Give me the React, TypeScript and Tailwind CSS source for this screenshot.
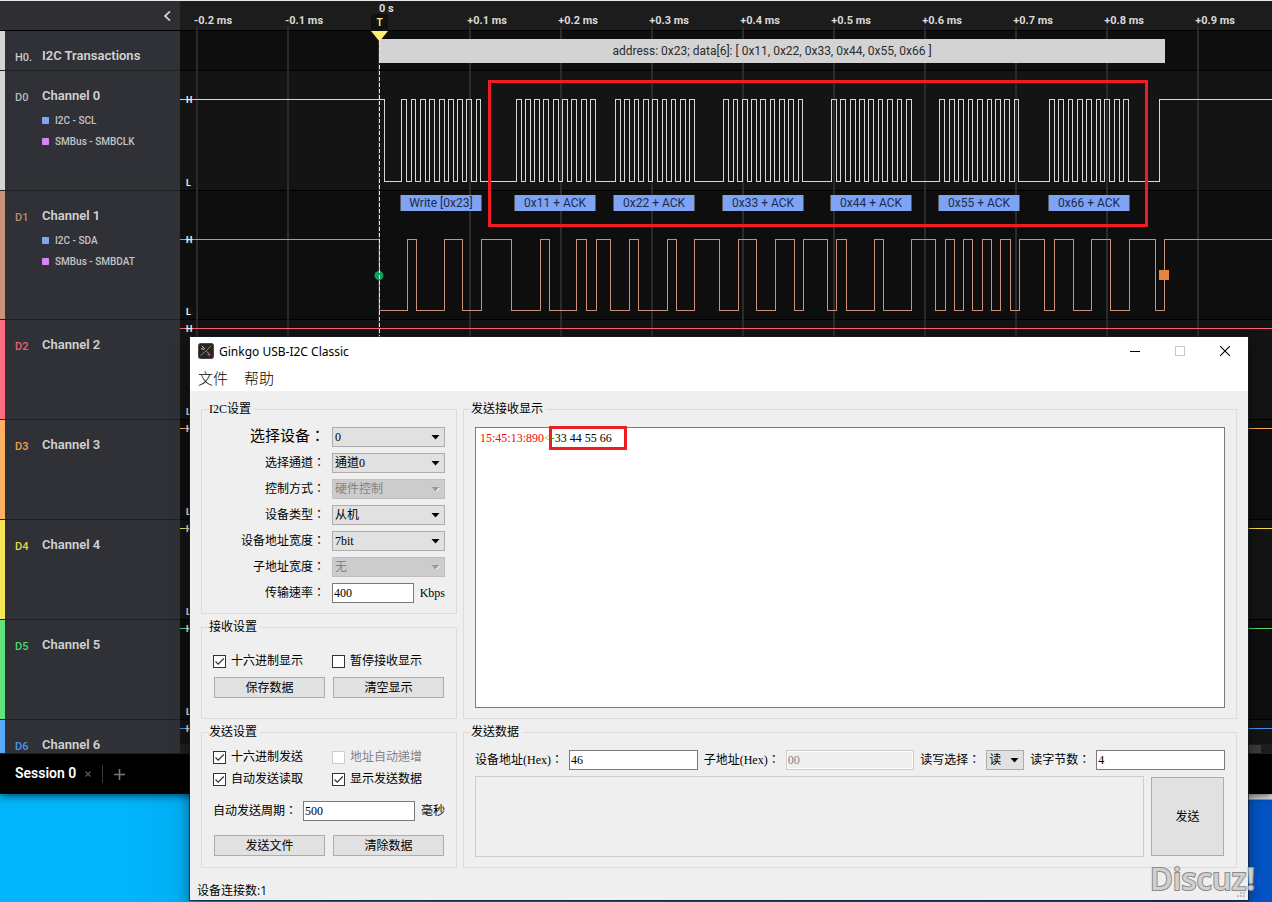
import type { ReactNode } from 'react';

const SANS = "font-['Roboto','Noto_Sans_CJK_SC',sans-serif]";
const FORM = "font-['Liberation_Serif','Noto_Sans_CJK_TC',serif]";

/* ---------- Logic analyzer: channel list ---------- */

type Channel = {
  code: string;
  name: string;
  strip: string;
  text: string;
  height: string;
  lane: string;
  tags?: string[];
};

const channels: Channel[] = [
  { code: 'H0.', name: 'I2C Transactions', strip: 'bg-[#d4d4d4]', text: 'text-[#c9c9cb]', height: 'h-10', lane: 'bg-[#0e0e0e]' },
  { code: 'D0', name: 'Channel 0', strip: 'bg-[#d4d4d4]', text: 'text-[#b9b9bb]', height: 'h-[120px]', lane: 'bg-[#141414]', tags: ['I2C - SCL', 'SMBus - SMBCLK'] },
  { code: 'D1', name: 'Channel 1', strip: 'bg-[#c7937a]', text: 'text-[#c08a70]', height: 'h-[129px]', lane: 'bg-[#0e0e0e]', tags: ['I2C - SDA', 'SMBus - SMBDAT'] },
  { code: 'D2', name: 'Channel 2', strip: 'bg-[#ff6b81]', text: 'text-[#f0607a]', height: 'h-[100px]', lane: 'bg-[#141414]' },
  { code: 'D3', name: 'Channel 3', strip: 'bg-[#ffb061]', text: 'text-[#f0a050]', height: 'h-[100px]', lane: 'bg-[#0e0e0e]' },
  { code: 'D4', name: 'Channel 4', strip: 'bg-[#f8e556]', text: 'text-[#e8d84c]', height: 'h-[100px]', lane: 'bg-[#141414]' },
  { code: 'D5', name: 'Channel 5', strip: 'bg-[#5fe37c]', text: 'text-[#52d870]', height: 'h-[100px]', lane: 'bg-[#0e0e0e]' },
  { code: 'D6', name: 'Channel 6', strip: 'bg-[#56a8fa]', text: 'text-[#4a98ea]', height: 'h-[34px]', lane: 'bg-[#141414]' },
];

const tagColors = ['bg-[#7ea6f6]', 'bg-[#d884f2]'];

function ChannelRow({ channel }: { channel: Channel }) {
  return (
    <li className={`flex shrink-0 overflow-hidden border-b border-[#1f2024] ${channel.height}`}>
      <span className={`w-[5px] shrink-0 ${channel.strip}`} />
      <span className={`w-[37px] shrink-0 pt-[17px] pl-[10px] text-[11px] leading-5 font-medium ${channel.text}`}>{channel.code}</span>
      <div className="pt-[15px]">
        <h2 className="text-[13px] leading-5 font-semibold text-[#d2d2d4]">{channel.name}</h2>
        {channel.tags && (
          <ul className="pt-1">
            {channel.tags.map((tag, i) => (
              <li key={tag} className="flex h-[21px] items-center gap-[6px] text-[10px] font-medium text-[#c4c4c7]">
                <span className={`size-[7px] rounded-[1px] ${tagColors[i]}`} />
                {tag}
              </li>
            ))}
          </ul>
        )}
      </div>
    </li>
  );
}

/* ---------- Logic analyzer: timeline ---------- */

const gridLines = [16, 107, 198, 289, 380, 471, 562, 653, 744, 835, 926, 1017];

const rulerLabels = [
  { x: 33, text: '-0.2 ms' },
  { x: 124, text: '-0.1 ms' },
  { x: 307, text: '+0.1 ms' },
  { x: 398, text: '+0.2 ms' },
  { x: 489, text: '+0.3 ms' },
  { x: 580, text: '+0.4 ms' },
  { x: 671, text: '+0.5 ms' },
  { x: 762, text: '+0.6 ms' },
  { x: 853, text: '+0.7 ms' },
  { x: 944, text: '+0.8 ms' },
  { x: 1035, text: '+0.9 ms' },
];

const clockEdges = [
  204,
  221, 226, 231, 235, 240, 245, 249, 254, 259, 264, 268, 273, 277, 282, 286, 291, 296, 300,
  336, 341, 345, 350, 354, 359, 363, 368, 373, 378, 382, 387, 391, 396, 401, 406, 410, 415,
  435, 440, 444, 449, 454, 458, 463, 468, 472, 477, 482, 486, 491, 495, 500, 505, 509, 514,
  543, 548, 553, 557, 562, 567, 571, 576, 580, 585, 590, 594, 599, 604, 608, 613, 618, 622,
  651, 656, 660, 665, 670, 675, 679, 684, 688, 693, 698, 702, 707, 712, 717, 721, 726, 731,
  759, 764, 769, 774, 778, 783, 788, 792, 797, 802, 807, 811, 815, 820, 824, 829, 834, 838,
  869, 874, 878, 883, 888, 892, 897, 902, 906, 911, 916, 920, 924, 929, 934, 939, 943, 948,
  979,
];

const dataEdges = [
  199, 227, 236, 264, 282, 301, 331, 360, 369, 396, 406, 416, 430, 449, 458, 487, 496, 514, 539,
  558, 576, 595, 614, 623, 647, 656, 666, 694, 703, 731, 755, 765, 774, 783, 792, 802, 811, 820,
  830, 839, 864, 874, 893, 911, 930, 949, 975, 984,
];

function squareWave(edges: number[], high: number, low: number) {
  let level = high;
  let d = `M0 ${high + 0.5}`;
  for (const x of edges) {
    const next = level === high ? low : high;
    d += `H${x + 0.5}V${next + 0.5}`;
    level = next;
  }
  return `${d}H4000`;
}

const idleLines = [
  { y: 328, color: '#ff5f78' },
  { y: 428, color: '#ffa94f' },
  { y: 528, color: '#f5e04a' },
  { y: 628, color: '#52d870' },
  { y: 728, color: '#3f94ea' },
];

const levelMarks = [
  { y: 99, text: 'H' }, { y: 182, text: 'L' },
  { y: 239, text: 'H' }, { y: 311, text: 'L' },
  { y: 328, text: 'H' }, { y: 411, text: 'L' },
  { y: 428, text: 'H' }, { y: 511, text: 'L' },
  { y: 528, text: 'H' }, { y: 611, text: 'L' },
  { y: 628, text: 'H' }, { y: 711, text: 'L' },
  { y: 728, text: 'H' },
];

const frames = [
  { x: 220, text: 'Write [0x23]' },
  { x: 334, text: '0x11 + ACK' },
  { x: 433, text: '0x22 + ACK' },
  { x: 542, text: '0x33 + ACK' },
  { x: 650, text: '0x44 + ACK' },
  { x: 758, text: '0x55 + ACK' },
  { x: 868, text: '0x66 + ACK' },
];

function Timeline() {
  return (
    <section className="relative flex min-w-0 flex-1 flex-col overflow-hidden">
      <div className="h-[30px] shrink-0 border-b border-black bg-[#1c1c1c]" />
      {channels.map((c) => (
        <div key={c.code} className={`shrink-0 border-b border-black ${c.height} ${c.lane}`} />
      ))}

      <svg className="absolute inset-x-0 -top-px h-[755px] w-full" aria-hidden="true">
        <g fill="#2b2b2d">
          {gridLines.map((x) => (
            <rect key={x} x={x} y={x === 198 ? 41 : 26} width="2" height="720" />
          ))}
        </g>
        <rect x="0" y="744" width="100%" height="10" fill="#1e1e1e" />
        <rect x="12" y="745" width="1069" height="8" fill="#3c3c3c" />
        <g fill="none" strokeWidth="1" shapeRendering="crispEdges">
          <path d={squareWave(clockEdges, 99, 181)} stroke="#d8d8d8" />
          <path d={squareWave(dataEdges, 239, 310)} stroke="#c9917a" />
          {idleLines.map((l) => (
            <path key={l.y} d={`M0 ${l.y + 0.5}H4000`} stroke={l.color} />
          ))}
        </g>
        <g className="text-[9px] font-bold" fill="#ececec">
          {levelMarks.map((m) => (
            <g key={m.y}>
              <rect x="5" y={m.y - 4} width="8" height="9" fill="#141414" />
              {m.text === 'H' && <path d={`M5 ${m.y + 0.5}h8`} stroke="#bdbdbd" shapeRendering="crispEdges" />}
              <text x="6" y={m.y + 3.5}>{m.text}</text>
            </g>
          ))}
        </g>
        <circle cx="199" cy="275.5" r="4.5" fill="#12a05c" />
        <rect x="979" y="270" width="10" height="10" fill="#e8853d" />
      </svg>

      {rulerLabels.map((l) => (
        <span key={l.text} className="absolute top-[13px] -translate-x-1/2 text-[11px] leading-[14px] font-bold whitespace-nowrap text-[#dadada]" style={{ left: l.x }}>
          {l.text}
        </span>
      ))}
      <span className="absolute top-px left-[199px] text-[11px] leading-[14px] font-bold text-[#dadada]">0 s</span>

      <div className="absolute top-[38px] left-[199px] flex h-6 w-[786px] items-center justify-center bg-[#d3d3d3] text-xs text-[#2c2c2c]">
        address: 0x23; data[6]: [ 0x11, 0x22, 0x33, 0x44, 0x55, 0x66 ]
      </div>

      <span className="absolute top-[13px] left-[191px] h-[17px] w-[17px] rounded-t-xs bg-[#111] text-center text-[10px] leading-[17px] font-bold text-[#f3e56a]">T</span>
      <svg className="absolute top-[30px] left-[191px] h-[306px] w-[17px]" aria-hidden="true">
        <path d="M0 0H17L8.5 10.5Z" fill="#ffee72" />
        <path d="M8.5 10V306" stroke="#ffee8a" strokeDasharray="4 2" />
      </svg>

      {frames.map((f) => (
        <span key={f.text} className="absolute top-[194px] h-4 w-[82px] border-x border-[#55585f] bg-[#7ea3f5] text-center text-xs leading-4 text-[#1d2b4e]" style={{ left: f.x }}>
          {f.text}
        </span>
      ))}

      <div className="absolute top-[79px] left-[308px] h-[147px] w-[660px] border-[3px] border-[#ee1c24]" />
    </section>
  );
}

function Analyzer() {
  return (
    <div className={`relative border-t border-[#e8e8e8] bg-black shadow-[0_2px_8px_rgba(0,0,0,0.6)] ${SANS}`}>
      <div className="flex">
        <aside className="flex w-[180px] shrink-0 flex-col bg-[#303136]">
          <div className="flex h-[30px] items-center justify-end border-b border-black bg-[#2e2f34] pr-[5px]">
            <button type="button" aria-label="Collapse" className="flex size-4 items-center justify-center">
              <svg width="8" height="12" viewBox="0 0 8 12" fill="none" stroke="#d0d0d2" strokeWidth="1.8">
                <path d="M7 1.300 2 6l5 4.700" />
              </svg>
            </button>
          </div>
          <ul>
            {channels.map((c) => (
              <ChannelRow key={c.code} channel={c} />
            ))}
          </ul>
        </aside>
        <Timeline />
      </div>
      <div className="flex h-10 items-center pl-[15px]">
        <span className="pb-[2px] text-sm font-semibold text-white">Session 0</span>
        <button type="button" aria-label="Close session" className="ml-[9px]">
          <svg width="6" height="6" viewBox="0 0 6 6" stroke="#5a5a60" strokeWidth="1.300">
            <path d="M.5 .5l5 5M5.500 .5l-5 5" />
          </svg>
        </button>
        <span className="ml-[11px] h-[18px] w-px bg-[#37373c]" />
        <button type="button" aria-label="New session" className="ml-[11px]">
          <svg width="11" height="11" viewBox="0 0 11 11" stroke="#77777c" strokeWidth="1.600">
            <path d="M5.500 0v11M0 5.500h11" />
          </svg>
        </button>
      </div>
    </div>
  );
}

/* ---------- Adapter dialog: form controls ---------- */

function Group({ title, className = '', children }: { title: string; className?: string; children: ReactNode }) {
  return (
    <fieldset className={`min-w-0 border border-[#dcdcdc] ${className}`}>
      <legend className="ml-[7px] pr-[3px] leading-4">{title}</legend>
      {children}
    </fieldset>
  );
}

function Dropdown({ id, value, disabled = false, className = '' }: { id: string; value: string; disabled?: boolean; className?: string }) {
  return (
    <div className={`relative h-5 ${className}`}>
      <select
        id={id}
        disabled={disabled}
        defaultValue={value}
        className="h-5 w-full appearance-none border border-[#adadad] bg-[#e1e1e1] pl-[2px] text-xs text-black opacity-100 outline-none disabled:border-[#bfbfbf] disabled:bg-[#cccccc] disabled:text-[#838383]"
      >
        <option value={value}>{value}</option>
      </select>
      <svg className="pointer-events-none absolute top-2 right-[5px]" width="9" height="5" viewBox="0 0 9 5" aria-hidden="true">
        {disabled && <path d="M1.500 1H9L5.500 5Z" fill="#fff" />}
        <path d="M.5 0h8L4.500 4.500Z" fill={disabled ? '#9a9a9a' : '#000'} />
      </svg>
    </div>
  );
}

function TextBox({ id, value, disabled = false, className = '' }: { id: string; value: string; disabled?: boolean; className?: string }) {
  return (
    <input
      id={id}
      type="text"
      defaultValue={value}
      disabled={disabled}
      className={`h-5 min-w-0 border border-[#7a7a7a] bg-white px-px text-xs text-black outline-none disabled:border-[#cccccc] disabled:bg-[#efefef] disabled:text-[#838383] ${className}`}
    />
  );
}

function Check({ label, checked = false, disabled = false }: { label: string; checked?: boolean; disabled?: boolean }) {
  return (
    <label className={`flex h-4 items-center gap-[5px] ${disabled ? 'text-[#838383]' : ''}`}>
      <span className="relative size-[13px]">
        <input type="checkbox" defaultChecked={checked} disabled={disabled} className="peer block size-[13px] appearance-none border border-[#333] bg-white disabled:border-[#ccc]" />
        <svg className="pointer-events-none absolute inset-0 hidden peer-checked:block" width="13" height="13" viewBox="0 0 13 13" fill="none" stroke="#333" strokeWidth="1.200">
          <path d="M2.500 6.500 5.200 9.200 10.800 3.500" />
        </svg>
      </span>
      <span className="leading-4">{label}</span>
    </label>
  );
}

function PushButton({ children, className = 'h-[21px]' }: { children: ReactNode; className?: string }) {
  return (
    <button type="button" className={`border border-[#adadad] bg-[#e1e1e1] ${className}`}>
      {children}
    </button>
  );
}

const settings = [
  { id: 'device', label: '选择设备：', value: '0', size: 'text-[15px]' },
  { id: 'channel', label: '选择通道：', value: '通道0' },
  { id: 'control', label: '控制方式：', value: '硬件控制', disabled: true },
  { id: 'kind', label: '设备类型：', value: '从机' },
  { id: 'address-width', label: '设备地址宽度：', value: '7bit' },
  { id: 'sub-address-width', label: '子地址宽度：', value: '无', disabled: true },
];

function SettingsColumn() {
  return (
    <div className="flex w-64 shrink-0 flex-col gap-[5px]">
      <Group title="I2C设置">
        <div className="flex flex-col gap-[6px] px-[11px] py-[10px]">
          {settings.map((s) => (
            <div key={s.id} className="flex h-5 items-center justify-end gap-[7px]">
              <label htmlFor={s.id} className={s.size}>{s.label}</label>
              <Dropdown id={s.id} value={s.value} disabled={s.disabled} className="w-[113px]" />
            </div>
          ))}
          <div className="flex h-5 items-center justify-end gap-[7px]">
            <label htmlFor="rate">传输速率：</label>
            <div className="flex w-[113px] items-center gap-[6px]">
              <TextBox id="rate" value="400" className="w-0 flex-1" />
              <span>Kbps</span>
            </div>
          </div>
        </div>
      </Group>

      <Group title="接收设置">
        <div className="px-[11px] pt-[18px] pb-5">
          <div className="grid grid-cols-[119px_1fr]">
            <Check label="十六进制显示" checked />
            <Check label="暂停接收显示" />
          </div>
          <div className="mx-px mt-2 grid grid-cols-2 gap-2">
            <PushButton>保存数据</PushButton>
            <PushButton>清空显示</PushButton>
          </div>
        </div>
      </Group>

      <Group title="发送设置">
        <div className="flex flex-col gap-[14px] px-[11px] pt-[9px] pb-[11px]">
          <div className="grid grid-cols-[119px_1fr] gap-y-[6px]">
            <Check label="十六进制发送" checked />
            <Check label="地址自动递增" disabled />
            <Check label="自动发送读取" checked />
            <Check label="显示发送数据" checked />
          </div>
          <div className="flex items-center gap-[6px]">
            <label htmlFor="period">自动发送周期：</label>
            <TextBox id="period" value="500" className="w-0 flex-1" />
            <span>毫秒</span>
          </div>
          <div className="mx-px grid grid-cols-2 gap-2">
            <PushButton>发送文件</PushButton>
            <PushButton>清除数据</PushButton>
          </div>
        </div>
      </Group>
    </div>
  );
}

function TransferColumn() {
  return (
    <div className="flex min-w-0 flex-1 flex-col gap-[5px]">
      <Group title="发送接收显示" className="flex flex-1 flex-col">
        <div className="relative mx-[11px] my-[10px] flex-1 border border-[#7a7a7a] bg-white px-1 py-[2px] leading-4">
          <span className="text-[#ff0000]">15:45:13:890</span>
          <span className="text-[#00e000]">&lt;-</span>
          <span>33 44 55 66</span>
          <div className="absolute -top-[2px] left-[73px] h-6 w-[78px] border-[3px] border-[#ee1c24]" />
        </div>
      </Group>

      <Group title="发送数据">
        <div className="flex flex-col gap-[6px] px-[11px] py-[10px]">
          <div className="flex items-center gap-[6px] whitespace-nowrap">
            <label htmlFor="dev-address">设备地址(Hex)：</label>
            <TextBox id="dev-address" value="46" className="w-0 flex-1" />
            <label htmlFor="sub-address">子地址(Hex)：</label>
            <TextBox id="sub-address" value="00" disabled className="w-0 flex-1 shadow-[inset_0_0_0_1px_#fff]" />
            <label htmlFor="mode">读写选择：</label>
            <Dropdown id="mode" value="读" className="w-[38px]" />
            <label htmlFor="byte-count">读字节数：</label>
            <TextBox id="byte-count" value="4" className="w-0 flex-1" />
          </div>
          <div className="flex gap-[7px]">
            <textarea aria-label="发送数据" disabled className="h-[81px] min-w-0 flex-1 resize-none border border-[#cccccc] bg-[#efefef]" />
            <PushButton className="my-px mr-px w-[73px]">发送</PushButton>
          </div>
        </div>
      </Group>
    </div>
  );
}

function AdapterDialog() {
  return (
    <div className={`absolute top-[337px] right-6 left-[190px] flex flex-col bg-[#efefef] text-xs text-black shadow-[0_0_0_1px_rgba(20,30,40,0.7),0_4px_14px_rgba(0,0,0,0.5)] ${FORM}`}>
      <header className="bg-white font-['Noto_Sans','Noto_Sans_CJK_SC',sans-serif]">
        <div className="flex h-7 items-center pl-2">
          <svg width="16" height="16" viewBox="0 0 16 16" aria-hidden="true">
            <rect x=".5" y=".5" width="15" height="15" rx="2" fill="#262526" stroke="#4c494b" />
            <path d="M4 3l3 3M3 5.500l3 1" stroke="#d8d4d2" strokeWidth=".9" fill="none" />
            <path d="M2.500 12.500 8 8l5-5" stroke="#a89258" strokeWidth=".9" fill="none" />
            <path d="M8.500 8.500l2.500 2" stroke="#8f8a88" strokeWidth="1" />
            <circle cx="11" cy="11.500" r="1.500" fill="#b8485a" />
          </svg>
          <h1 className="ml-[5px] flex-1 pt-px text-xs">Ginkgo USB-I2C Classic</h1>
          <div className="flex">
            <button type="button" aria-label="Minimize" className="flex h-7 w-[45px] items-center justify-center">
              <svg width="10" height="10" viewBox="0 0 10 10" stroke="#000"><path d="M0 5.500h10" /></svg>
            </button>
            <button type="button" aria-label="Maximize" disabled className="flex h-7 w-[45px] items-center justify-center">
              <svg width="10" height="10" viewBox="0 0 10 10" fill="none" stroke="#c8c8c8"><rect x=".5" y=".5" width="9" height="9" /></svg>
            </button>
            <button type="button" aria-label="Close" className="flex h-7 w-[46px] items-center justify-center">
              <svg width="10" height="10" viewBox="0 0 10 10" stroke="#000" strokeWidth="1.100"><path d="M0 0l10 10M10 0 0 10" /></svg>
            </button>
          </div>
        </div>
        <nav className="flex h-[26px] gap-4 pl-2 text-[15px] font-light">
          <button type="button">文件</button>
          <button type="button">帮助</button>
        </nav>
      </header>

      <main className="flex gap-[6px] px-[11px] pt-[10px]">
        <SettingsColumn />
        <TransferColumn />
      </main>

      <footer className="flex h-8 items-end justify-between pl-[7px] font-['Open_Sans','Noto_Sans_CJK_SC',sans-serif]">
        <span className="pb-px leading-4">设备连接数:1</span>
        <svg width="12" height="12" viewBox="0 0 12 12" fill="#bdbdbd" aria-hidden="true">
          <path d="M7 1h2v2H7zM4 4h2v2H4zM7 4h2v2H7zM1 7h2v2H1zM4 7h2v2H4zM7 7h2v2H7z" />
        </svg>
      </footer>
    </div>
  );
}

export default function App() {
  return (
    <div className="relative min-h-screen overflow-hidden bg-linear-to-r from-[#00b5fb] from-10% via-[#0878c4] via-50% to-[#0453c6]">
      <div className="absolute top-[780px] right-0 h-5 w-10 border-b border-[#8b9bb5] bg-[#e4e2e2]" />
      <Analyzer />
      <AdapterDialog />
      <span className="absolute right-[17px] bottom-1 font-['Open_Sans',sans-serif] text-[31px] leading-10 font-semibold text-[#d0d0d0] [paint-order:stroke_fill] [-webkit-text-stroke:2px_#8c8c8c]">
        Discuz!
      </span>
    </div>
  );
}
